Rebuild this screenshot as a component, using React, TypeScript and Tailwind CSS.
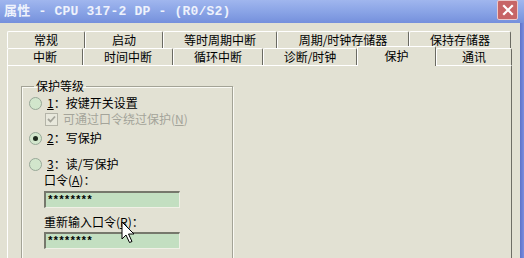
import React from "react";

const cjk = "font-['Noto_Sans_CJK_SC','Noto_Sans',sans-serif]";

function Tab({ label, w }: { label: string; w: string }) {
  return (
    <div
      className={`${w} h-full flex items-center justify-center border-t border-l border-t-white border-l-white border-r border-r-[#6a6a62] rounded-tl-[2px] rounded-tr-[2px] text-[12px] leading-none text-black`}
    >
      {label}
    </div>
  );
}

function Radio({ checked }: { checked?: boolean }) {
  return (
    <span className="w-[13px] h-[13px] rounded-full border border-[#98a898] bg-[#d2e6cc] flex items-center justify-center shrink-0">
      {checked && <span className="w-[5px] h-[5px] rounded-full bg-[#1e2a1e]" />}
    </span>
  );
}

function PasswordBox() {
  return (
    <div className="w-[136px] h-[17px] bg-[#c3dfc1] border-t-2 border-l-2 border-t-[#76786c] border-l-[#76786c] border-b border-r border-b-[#f0f0e6] border-r-[#f0f0e6] flex items-center pl-[1px] text-[11px] leading-none font-bold tracking-[-1px] font-['Liberation_Mono',monospace]">
      ********
    </div>
  );
}

export default function App() {
  return (
    <div className={`w-[524px] h-[258px] overflow-hidden bg-[#e2e1d3] relative ${cjk}`}>
      {/* Title bar */}
      <div className="h-[23px] flex items-start bg-gradient-to-b from-[#a0b6ee] via-[#8aa4e6] to-[#7590dc]">
        <span className="pl-[4px] pt-[4px] text-[13px] leading-[15px] font-bold text-[#eef2fc] font-['Liberation_Mono','Noto_Sans_CJK_SC',monospace] tracking-[0.2px]">
          属性 - CPU 317-2 DP - (R0/S2)
        </span>
        <div className="ml-auto mr-[6px] w-[21px] h-[20px] bg-[#c76566] border border-[#e9c9cb] rounded-[2px] flex items-center justify-center">
          <svg width="12" height="12" viewBox="0 0 12 12">
            <path d="M2 2 L10 10 M10 2 L2 10" stroke="#fff" strokeWidth="2.2" strokeLinecap="square" />
          </svg>
        </div>
      </div>

      <div className="flex h-[235px]">
        {/* dialog body */}
        <div className="w-[520px] pl-[7px] pt-[8px] flex flex-col">
          <div className="w-[505px] flex flex-col flex-1">
            {/* Tab row 1 */}
            <div className="h-[17px] flex">
              <Tab label="常规" w="w-[78px]" />
              <Tab label="启动" w="w-[78px]" />
              <Tab label="等时周期中断" w="w-[114px]" />
              <Tab label="周期/时钟存储器" w="w-[132px]" />
              <Tab label="保持存储器" w="w-[102px]" />
            </div>
            {/* Tab row 2 */}
            <div className="h-[17px] flex items-end">
              <Tab label="中断" w="w-[76px]" />
              <Tab label="时间中断" w="w-[90px]" />
              <Tab label="循环中断" w="w-[90px]" />
              <Tab label="诊断/时钟" w="w-[94px]" />
              <div className="w-[79px] h-[20px] -mb-[1px] relative z-10 bg-[#e2e1d3] flex items-start justify-center pt-[3px] border-t border-l border-t-white border-l-white border-r border-r-[#6a6a62] rounded-tl-[2px] rounded-tr-[2px] text-[12px] leading-none">
                保护
              </div>
              <Tab label="通讯" w="w-[76px]" />
            </div>

            {/* Panel */}
            <div className="flex-1 border-t border-l border-t-white border-l-white border-r border-r-[#6e6e66] pl-[13px] pt-[12px]">
              <fieldset className="w-[212px] h-[200px] border border-[#a3a396] shadow-[1px_1px_0_#fafaf4,inset_1px_1px_0_#fafaf4] pl-[7px] pt-0">
                <legend className="ml-[5px] px-[2px] text-[12px] leading-[16px]">保护等级</legend>

                <div className="h-[16px] mt-[1px] flex items-center gap-[5px] text-[12px] leading-none">
                  <Radio />
                  <span>
                    <span className="underline">1</span>：按键开关设置
                  </span>
                </div>
                <div className="h-[16px] flex items-center ml-[16px] gap-[5px] text-[12px] leading-none text-[#a4a49a]">
                  <span className="w-[13px] h-[13px] border border-[#b4b4a8] bg-[#e8e8dc] flex items-center justify-center">
                    <svg width="9" height="9" viewBox="0 0 9 9">
                      <path d="M1 4 L3.5 6.5 L8 1.5" stroke="#a4a49a" strokeWidth="1.8" fill="none" />
                    </svg>
                  </span>
                  <span>
                    可通过口令绕过保护(<span className="underline">N</span>)
                  </span>
                </div>
                <div className="h-[16px] mt-[3px] flex items-center gap-[5px] text-[12px] leading-none">
                  <Radio checked />
                  <span>
                    <span className="underline">2</span>：写保护
                  </span>
                </div>
                <div className="h-[16px] mt-[10px] flex items-center gap-[5px] text-[12px] leading-none">
                  <Radio />
                  <span>
                    <span className="underline">3</span>：读/写保护
                  </span>
                </div>
                <div className="ml-[15px] flex flex-col">
                  <div className="h-[16px] flex items-center text-[12px] leading-none">
                    口令(<span className="underline">A</span>)：
                  </div>
                  <div className="mt-[3px]">
                    <PasswordBox />
                  </div>
                  <div className="h-[16px] mt-[6px] flex items-center text-[12px] leading-none">
                    重新输入口令(<span className="underline">R</span>)：
                  </div>
                  <div className="mt-[2px]">
                    <PasswordBox />
                  </div>
                </div>
              </fieldset>
            </div>
          </div>
        </div>
        {/* window border */}
        <div className="w-[4px] bg-gradient-to-r from-[#5d72c8] to-[#7b8ee0]" />
      </div>

      {/* mouse pointer */}
      <svg className="absolute left-[121px] top-[221px]" width="15" height="24" viewBox="0 0 15 24">
        <path
          d="M1 1 L1 18 L5 14 L8.5 21.5 L11 20.5 L7.5 13 L13 13 Z"
          fill="#fff"
          stroke="#000"
          strokeWidth="1"
          strokeLinejoin="miter"
        />
      </svg>
    </div>
  );
}
